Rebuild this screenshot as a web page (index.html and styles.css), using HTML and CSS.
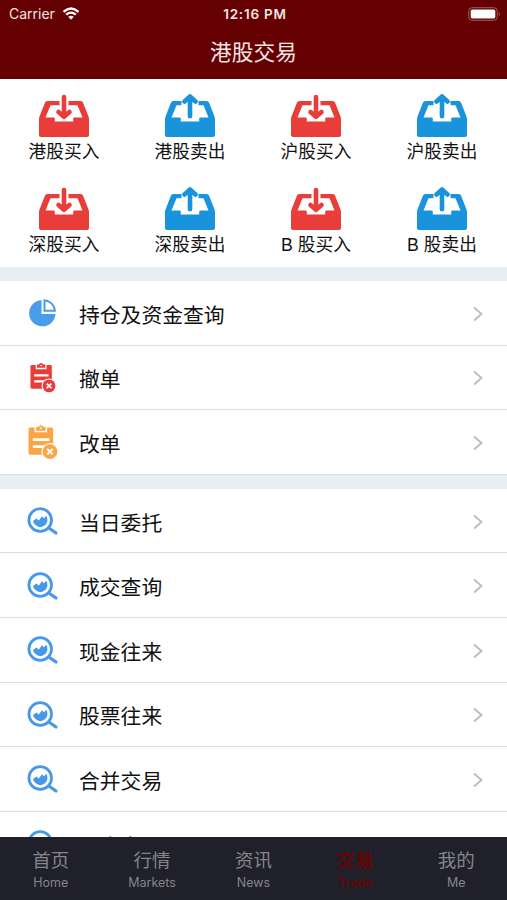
FILE: index.html
```html
<!DOCTYPE html>
<html lang="zh-CN">
<head>
<meta charset="utf-8">
<title>港股交易</title>
<link rel="stylesheet" href="styles.css">
</head>
<body>
<svg class="defs" width="0" height="0">
  <symbol id="tray" viewBox="0 0 50 36">
    <path fill-rule="evenodd" d="M8.500 0H41.500Q43.500 0 44 1.500L49.500 15.500Q50 17 50 18V34Q50 36 48 36H2Q0 36 0 34V18Q0 17 .5 15.500L6 1.500Q6.500 0 8.500 0ZM11.500 4.200 6.500 16.500H14.500Q15.800 16.500 15.800 17.800V20.500H34.200V17.800Q34.200 16.500 35.500 16.500H43.500L38.500 4.200Z"/>
  </symbol>
  <symbol id="buy" viewBox="0 0 50 43">
    <use href="#tray" y="7" width="50" height="36"/>
    <path class="halo" d="M25 2.500V16"/>
    <path class="arrow" d="M25 3V21M19.500 18 25 22.800 30.500 18"/>
    <path d="M20 18H30L25 23Z"/>
  </symbol>
  <symbol id="sell" viewBox="0 0 50 43">
    <use href="#tray" y="7" width="50" height="36"/>
    <path class="halo wide" d="M25 18V6"/>
    <path class="arrow" d="M25 22.300V4M19.500 7.500 25 2.500 30.500 7.500"/>
    <path d="M20 8H30L25 3Z"/>
  </symbol>
  <symbol id="pie" viewBox="0 0 32 32">
    <path d="M14.500 3V17H28.500A13.200 13.200 0 1 1 14.500 3Z"/>
    <path fill-rule="evenodd" d="M16.500 2.200A12.700 12.700 0 0 1 29 14.800H16.500ZM18.500 4.500V12.800H26.700A10.500 10.500 0 0 0 18.500 4.500Z"/>
  </symbol>
  <symbol id="order" viewBox="0 0 28 32">
    <path fill-rule="evenodd" d="M2 2.500H6.200V7H17.800V2.500H22Q23.500 2.500 23.500 4V28H2Q.5 28 .5 26.500V4Q.5 2.500 2 2.500ZM4.500 12.500H20V15H4.500ZM4.500 19H15V21.500H4.500Z"/>
    <path fill-rule="evenodd" d="M7.500 2H9.500Q12-1.500 14.500 2H16.500V5.500H7.500ZM11 2.500V3.700H13V2.500Z"/>
    <circle class="knock" cx="20.500" cy="25" r="8"/>
    <circle cx="20.500" cy="25" r="6.900"/>
    <path class="cross" d="M18 22.500 23 27.500M23 22.500 18 27.500"/>
  </symbol>
  <symbol id="search" viewBox="0 0 32 30">
    <circle class="ring" cx="13.200" cy="14" r="11.300"/>
    <path class="handle" d="M22.500 22.500 29 27"/>
    <path d="M6 15 9.300 12.500 11.800 14.500 15 10.200 16.800 12.200 19.500 9.800Q21.800 15 18.500 18.800 13.200 23.500 8.200 18.800 6.300 17 6 15Z"/>
  </symbol>
  <symbol id="chevron" viewBox="0 0 12 16"><path d="M2 1.500 9.500 8 2 14.500"/></symbol>
</svg>
<div class="app">
  <header class="header">
    <div class="status">
      <div class="carrier"><span>Carrier</span>
        <svg class="wifi" viewBox="0 0 18 13"><path d="M1.500 4.800Q9-1.800 16.500 4.800M4.200 7.700Q9 3.500 13.800 7.700"/><path class="wifi-dot" d="M6.200 9.800Q9 7.600 11.800 9.800L9 12.800Z"/></svg>
      </div>
      <div class="clock">12:16 PM</div>
      <svg class="battery" viewBox="0 0 33 14"><rect class="shell" x=".7" y=".7" width="28.600" height="12.600" rx="3.500"/><rect x="2.700" y="2.600" width="24.600" height="8.800" rx="1.600"/><path class="cap" d="M31 5Q33 7 31 9Z"/></svg>
    </div>
    <h1 class="title">港股交易</h1>
  </header>
  <main class="content">
    <nav class="shortcuts">
      <a class="shortcut buy"><svg><use href="#buy"/></svg><span>港股买入</span></a>
      <a class="shortcut sell"><svg><use href="#sell"/></svg><span>港股卖出</span></a>
      <a class="shortcut buy"><svg><use href="#buy"/></svg><span>沪股买入</span></a>
      <a class="shortcut sell"><svg><use href="#sell"/></svg><span>沪股卖出</span></a>
      <a class="shortcut buy"><svg><use href="#buy"/></svg><span>深股买入</span></a>
      <a class="shortcut sell"><svg><use href="#sell"/></svg><span>深股卖出</span></a>
      <a class="shortcut buy"><svg><use href="#buy"/></svg><span>B 股买入</span></a>
      <a class="shortcut sell"><svg><use href="#sell"/></svg><span>B 股卖出</span></a>
    </nav>
    <section class="group">
      <a class="row"><svg class="icon pie"><use href="#pie"/></svg><span>持仓及资金查询</span><svg class="chevron"><use href="#chevron"/></svg></a>
      <a class="row"><svg class="icon cancel"><use href="#order"/></svg><span>撤单</span><svg class="chevron"><use href="#chevron"/></svg></a>
      <a class="row"><svg class="icon amend"><use href="#order"/></svg><span>改单</span><svg class="chevron"><use href="#chevron"/></svg></a>
    </section>
    <section class="group">
      <a class="row"><svg class="icon search"><use href="#search"/></svg><span>当日委托</span><svg class="chevron"><use href="#chevron"/></svg></a>
      <a class="row"><svg class="icon search"><use href="#search"/></svg><span>成交查询</span><svg class="chevron"><use href="#chevron"/></svg></a>
      <a class="row"><svg class="icon search"><use href="#search"/></svg><span>现金往来</span><svg class="chevron"><use href="#chevron"/></svg></a>
      <a class="row"><svg class="icon search"><use href="#search"/></svg><span>股票往来</span><svg class="chevron"><use href="#chevron"/></svg></a>
      <a class="row"><svg class="icon search"><use href="#search"/></svg><span>合并交易</span><svg class="chevron"><use href="#chevron"/></svg></a>
      <a class="row"><svg class="icon search"><use href="#search"/></svg><span>历史交易</span></a>
    </section>
  </main>
  <nav class="tabs">
    <a class="tab"><b>首页</b><span>Home</span></a>
    <a class="tab"><b>行情</b><span>Markets</span></a>
    <a class="tab"><b>资讯</b><span>News</span></a>
    <a class="tab active"><b>交易</b><span>Trade</span></a>
    <a class="tab"><b>我的</b><span>Me</span></a>
  </nav>
</div>
</body>
</html>
```
FILE: styles.css
```css
* { box-sizing: border-box; }
body {
  margin: 0;
  font-family: "Liberation Sans", "Noto Sans CJK SC", sans-serif;
  color: #111;
  background: #fff;
}
.defs { position: absolute; }
.app {
  display: flex;
  flex-direction: column;
  height: 900px;
  overflow: hidden;
}
.header {
  flex: none;
  height: 79px;
  background: #640002;
  color: #f5e4e4;
}
.status {
  display: grid;
  grid-template-columns: 1fr auto 1fr;
  align-items: center;
  height: 27px;
  padding: 0 6px 0 9px;
  font-family: Inter, sans-serif;
}
.carrier {
  display: flex;
  align-items: center;
  gap: 7px;
  font-size: 14px;
}
.wifi { width: 18px; height: 13px; fill: none; stroke: #fff; stroke-width: 2.300; }
.wifi .wifi-dot { fill: #fff; stroke: none; }
.clock { font-size: 13.500px; font-weight: 600; letter-spacing: .8px; }
.battery { justify-self: end; width: 33px; height: 14px; fill: #fff; }
.battery .shell { fill: none; stroke: #a45c5e; stroke-width: 1; }
.battery .cap { fill: #a45c5e; }
.title {
  margin: 0;
  padding-top: 1px;
  font-size: 21.700px;
  font-weight: 400;
  line-height: 50px;
  text-align: center;
}
.content { flex: 1; min-height: 0; overflow: hidden; }
.shortcuts {
  display: grid;
  grid-template-columns: repeat(4, 126px);
  grid-auto-rows: 93px;
  height: 188px;
  padding: 15px 0 0 1px;
}
.shortcut { display: flex; flex-direction: column; align-items: center; gap: 2px; }
.shortcut svg { width: 50px; height: 43px; fill: currentColor; }
.shortcut span { color: #111; font-size: 17.700px; line-height: 26px; white-space: nowrap; }
.arrow { fill: none; stroke: currentColor; stroke-width: 4.600; stroke-linecap: round; stroke-linejoin: round; }
.halo { fill: none; stroke: #fff; stroke-width: 9; }
.halo.wide { stroke-width: 17; }
.buy { color: #e83d39; }
.sell { color: #1993dc; }
.group { border-top: 14px solid #e8eef3; }
.row {
  display: flex;
  align-items: center;
  height: 64.600px;
  padding: 3px 23px 0 27px;
  border-bottom: 1px solid #dcdcde;
}
.row span { flex: 1; font-size: 20.800px; line-height: 30px; padding-top: 3px; }
.icon { flex: none; width: 32px; height: 32px; margin: 0 20px 3px 0; fill: currentColor; }
.pie { color: #4a9cec; }
.cancel { color: #e93c38; width: 26px; height: 31px; margin: 0 23px 3px 3px; }
.amend { color: #fba545; width: 30px; height: 36px; margin: 0 21px 3px 1px; }
.search { color: #4798e9; height: 30px; margin-bottom: 2px; }
.knock { fill: #fff; }
.cross { stroke: #fff; stroke-width: 1.800; }
.ring { fill: none; stroke: currentColor; stroke-width: 2.800; }
.handle { stroke: currentColor; stroke-width: 3.200; stroke-linecap: round; }
.chevron { flex: none; width: 12px; height: 16px; margin-bottom: 1px; fill: none; stroke: #bdbdc0; stroke-width: 1.900; }
.tabs {
  flex: none;
  display: grid;
  grid-template-columns: repeat(5, 1fr);
  height: 63px;
  padding-top: 10px;
  background: #20202a;
  color: #85858c;
}
.tab { display: flex; flex-direction: column; align-items: center; }
.tab b { font-size: 18.500px; font-weight: 400; line-height: 28px; }
.tab span { font-family: Inter, sans-serif; font-size: 12.500px; line-height: 16px; }
.tab.active { color: #640508; }
.active b, .active span { font-weight: 600; }
```
